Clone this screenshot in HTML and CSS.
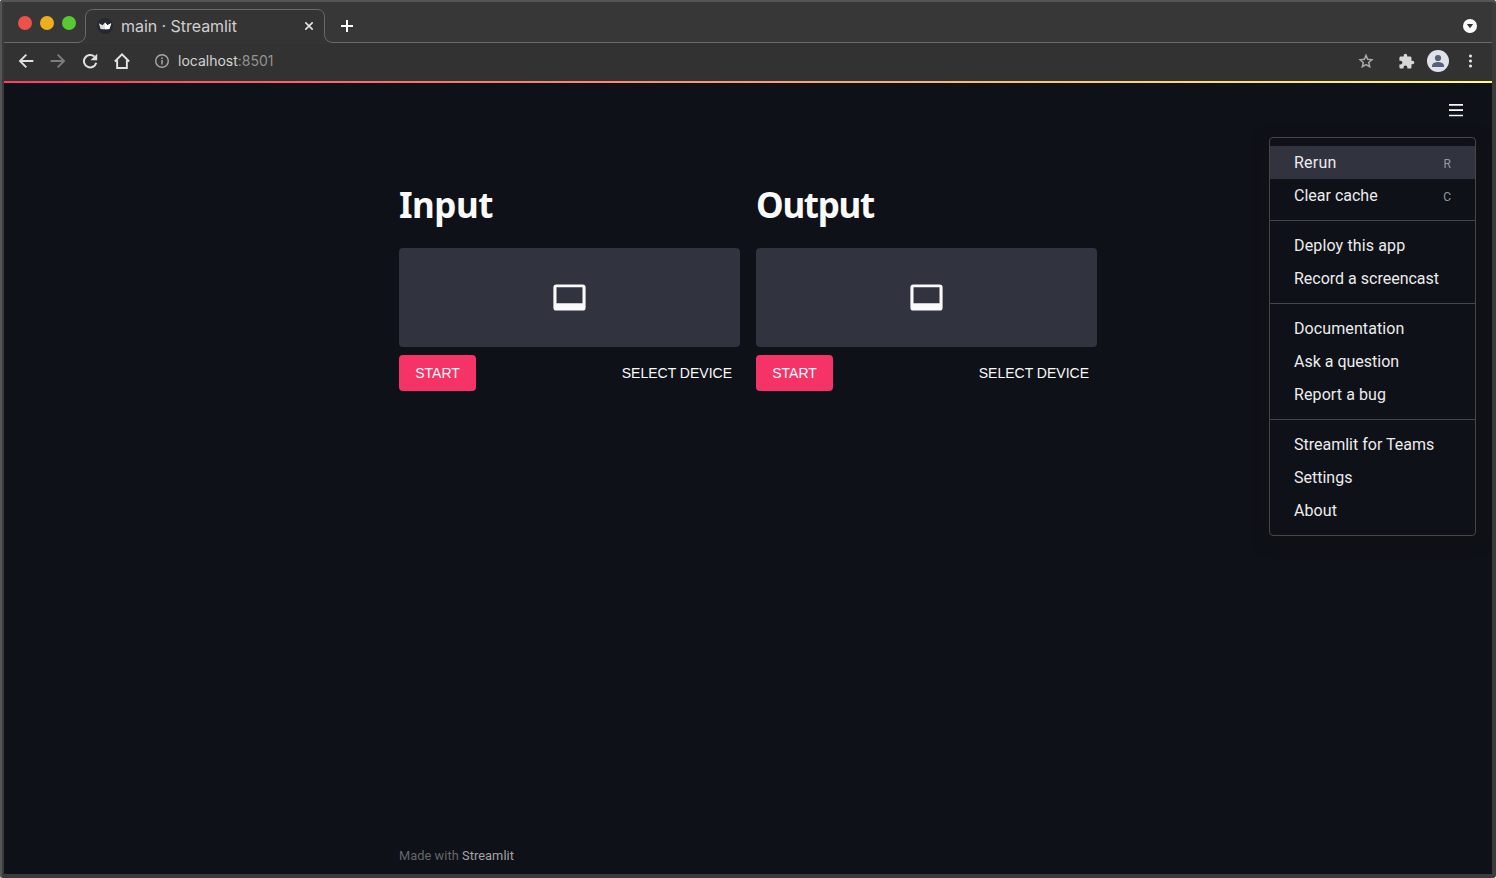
FILE: index.html
```html
<!DOCTYPE html>
<html lang="en">
<head>
<meta charset="utf-8">
<title>main · Streamlit</title>
<link rel="stylesheet" href="styles.css">
</head>
<body>
<div class="window">
  <header class="tabstrip">
    <div class="lights"><i class="light red"></i><i class="light yellow"></i><i class="light green"></i></div>
    <div class="tab">
      <svg class="tab-shape" width="256" height="36" viewBox="0 0 256 36"><path d="M0 34.500C5 34.500 8.500 31 8.500 26.500V9.500C8.500 4.500 11.500 1.500 16.500 1.500H240C245 1.500 247.500 4.500 247.500 9.500V26.500C247.500 31 251 34.500 256 34.500V36H0Z" fill="#343434"/><path d="M0 34.500C5 34.500 8.500 31 8.500 26.500V9.500C8.500 4.500 11.500 1.500 16.500 1.500H240C245 1.500 247.500 4.500 247.500 9.500V26.500C247.500 31 251 34.500 256 34.500" fill="none" stroke="#6b6b6b"/></svg>
      <svg class="favicon" width="16" height="16" viewBox="0 0 16 16"><circle cx="8" cy="8" r="8" fill="#262730"/><path d="M1.800 5.200 5.600 7.200 8 4.500 10.400 7.200 14.200 5.200 12.400 10.900Q8 11.800 3.600 10.900Z" fill="#ddd"/><path d="M8 4.500 10.400 7.200 14.200 5.200 12.400 10.900 8 11.200Z" fill="#fff"/></svg>
      <span class="tab-title">main · Streamlit</span>
      <svg class="tab-close" width="8" height="8" viewBox="0 0 8 8"><path d="M.3.300l7.400 7.400M7.700.3l-7.400 7.400" stroke="#e4e4e4" stroke-width="1.600"/></svg>
    </div>
    <svg class="new-tab" width="12" height="12" viewBox="0 0 12 12"><path d="M6 0v12M0 6h12" stroke="#fff" stroke-width="2"/></svg>
    <svg class="tab-search" width="14" height="14" viewBox="0 0 14 14"><circle cx="7" cy="7" r="7" fill="#fff"/><path d="M3.800 4.900h6.400L7 9.300Z" fill="#333"/></svg>
  </header>
  <nav class="toolbar">
    <svg class="nav-icon" viewBox="0 0 24 24" fill="#e2e2e2"><path d="M23 10.500H6.500l7-7-2-2L1 12l10.500 10.500 2-2-7-7H23z"/></svg>
    <svg class="nav-icon" viewBox="0 0 24 24" fill="#7d7d7d"><path d="M1 10.500h16.500l-7-7 2-2L23 12 12.500 22.500l-2-2 7-7H1z"/></svg>
    <svg class="nav-icon" viewBox="0 0 24 24"><path d="M21.300 14.500A9.300 9.300 0 1 1 18.500 5.400" fill="none" stroke="#e2e2e2" stroke-width="3"/><path d="M22.800 1v10h-10z" fill="#e2e2e2"/></svg>
    <svg class="nav-icon" viewBox="0 0 24 24"><path d="M1.300 12.800 12 2.100 22.700 12.800M4.700 11v11.500h14.600V11" fill="none" stroke="#e2e2e2" stroke-width="2.900"/></svg>
    <div class="address">
      <svg width="14" height="14" viewBox="0 0 14 14"><circle cx="7" cy="7" r="6.300" fill="none" stroke="#a5a8ac" stroke-width="1.400"/><path d="M7 6v4.500M7 3.400v1.500" stroke="#a5a8ac" stroke-width="1.500"/></svg>
      <span class="host">localhost<span class="port">:8501</span></span>
    </div>
    <svg class="star" width="16" height="16" viewBox="0 0 24 24"><path d="m12 3.600 2.500 5.900 6.400.6-4.800 4.200 1.400 6.300L12 17.300l-5.500 3.300 1.400-6.300-4.800-4.200 6.400-.6z" fill="none" stroke="#aaa" stroke-width="2.200"/></svg>
    <svg class="puzzle" width="17" height="17" viewBox="0 0 24 24"><path fill="#d8d8d8" d="M20.500 11H19V7c0-1.100-.9-2-2-2h-4V3.500a2.500 2.500 0 0 0-5 0V5H4c-1.100 0-2 .9-2 2v3.800h1.500a2.700 2.700 0 0 1 0 5.400H2V20c0 1.100.9 2 2 2h3.800v-1.500a2.700 2.700 0 0 1 5.400 0V22H17c1.100 0 2-.9 2-2v-4h1.500a2.500 2.500 0 0 0 0-5z"/></svg>
    <svg class="avatar" width="22" height="22" viewBox="0 0 22 22"><circle cx="11" cy="11" r="11" fill="#dfe2e8"/><circle cx="11" cy="8" r="3.100" fill="#566078"/><path d="M5 17v-1.500c0-2.400 4-3.500 6-3.500s6 1.100 6 3.500V17z" fill="#566078"/></svg>
    <svg class="kebab" width="4" height="14" viewBox="0 0 4 14" fill="#e2e2e2"><circle cx="1.500" cy="2" r="1.550"/><circle cx="1.500" cy="7" r="1.550"/><circle cx="1.500" cy="12" r="1.550"/></svg>
  </nav>
  <div class="decoration"></div>
  <main class="app">
    <svg class="hamburger" width="14" height="13" viewBox="0 0 14 13"><path d="M0 .8h14M0 6.150h14M0 11.500h14" stroke="#fafafa" stroke-width="1.700"/></svg>
    <div class="columns">
      <section class="column">
        <h1 class="heading input">Input</h1>
        <div class="preview"><svg width="33" height="27" viewBox="0 0 33 27"><path fill-rule="evenodd" fill="#fafafa" d="M3.300.4h26.400a2.900 2.900 0 0 1 2.900 2.900v20.400a2.900 2.900 0 0 1-2.900 2.900H3.300a2.900 2.900 0 0 1-2.900-2.900V3.300A2.900 2.900 0 0 1 3.300.4zM3.500 3.300v16h26v-16z"/></svg></div>
        <div class="actions"><button class="start">START</button><button class="select">SELECT DEVICE</button></div>
      </section>
      <section class="column">
        <h1 class="heading output">Output</h1>
        <div class="preview"><svg width="33" height="27" viewBox="0 0 33 27"><path fill-rule="evenodd" fill="#fafafa" d="M3.300.4h26.400a2.900 2.900 0 0 1 2.900 2.900v20.400a2.900 2.900 0 0 1-2.900 2.900H3.300a2.900 2.900 0 0 1-2.900-2.900V3.300A2.900 2.900 0 0 1 3.300.4zM3.500 3.300v16h26v-16z"/></svg></div>
        <div class="actions"><button class="start">START</button><button class="select">SELECT DEVICE</button></div>
      </section>
    </div>
    <footer class="footer">Made with <span class="brand">Streamlit</span></footer>
    <div class="menu">
      <ul class="group">
        <li class="item active"><span class="rerun">Rerun</span><span class="key">R</span></li>
        <li class="item"><span>Clear cache</span><span class="key">C</span></li>
      </ul>
      <ul class="group">
        <li class="item"><span class="deploy">Deploy this app</span></li>
        <li class="item"><span>Record a screencast</span></li>
      </ul>
      <ul class="group">
        <li class="item"><span class="docs">Documentation</span></li>
        <li class="item"><span>Ask a question</span></li>
        <li class="item"><span class="docs">Report a bug</span></li>
      </ul>
      <ul class="group">
        <li class="item"><span>Streamlit for Teams</span></li>
        <li class="item"><span>Settings</span></li>
        <li class="item"><span class="docs">About</span></li>
      </ul>
    </div>
  </main>
</div>
</body>
</html>
```
FILE: styles.css
```css
* { box-sizing: border-box; }
html { background: #fff; }
body { margin: 0; overflow: hidden; }
svg { display: block; flex: none; }

.window {
  display: flex;
  flex-direction: column;
  width: 1496px;
  height: 878px;
  padding: 2px 4px 4px;
  border-radius: 3px;
  background: #3b3b3b;
  box-shadow: inset 0 2px #555, inset 2px 0 #555;
}

.tabstrip {
  display: flex;
  align-items: flex-start;
  height: 41px;
  flex: none;
  background: #373737;
  border-bottom: 1px solid #6b6b6b;
}
.lights { display: flex; gap: 8px; padding: 14px 0 0 14px; }
.light { width: 14px; height: 14px; border-radius: 50%; }
.red { background: #ed5149; }
.yellow { background: #f0ad1c; }
.green { background: #57c933; }
.tab {
  position: relative;
  display: flex;
  align-items: center;
  width: 256px;
  height: 34px;
  margin: 6px 0 0 1px;
  padding: 2px 0 0 20px;
}
.tab-shape { position: absolute; left: 0; top: 0; }
.favicon { position: relative; }
.tab-title {
  position: relative;
  margin-left: 8px;
  width: 184px;
  font: 16px/20px Inter, sans-serif;
  letter-spacing: -.05px;
  color: #cfcfcf;
  white-space: nowrap;
}
.tab-close { position: relative; }
.new-tab { margin: 18px 0 0 8px; }
.tab-search { margin: 17px 15px 0 auto; }

.toolbar {
  display: flex;
  align-items: center;
  flex: none;
  height: 38px;
  padding: 0 19px 2px 14px;
  background: #323232;
}
.nav-icon { width: 16px; height: 16px; margin-right: 16px; }
.address { display: flex; align-items: center; gap: 9px; flex: 1; padding-left: 9px; }
.host { font: 14px/18px Inter, sans-serif; color: #d2d2d2; }
.port { color: #929292; }
.puzzle { margin-left: 24px; }
.avatar { margin-left: 12px; }
.kebab { margin-left: 20px; }

.decoration {
  flex: none;
  height: 2px;
  background: linear-gradient(90deg, #ff3d60, #fffd80);
}

.app {
  position: relative;
  display: flex;
  flex-direction: column;
  flex: 1;
  background: #0e1117;
  font-family: Roboto, sans-serif;
}
.hamburger { align-self: flex-end; margin: 21px 29px 0 0; }
.columns { display: flex; gap: 16px; padding: 66px 0 0 395px; }
.column { width: 341px; }
.heading {
  margin: 0;
  height: 65px;
  color: #fafafa;
  font: 700 35px/44px "Noto Sans", sans-serif;
}
.input { letter-spacing: -.5px; }
.output { letter-spacing: -1.3px; }
.preview {
  display: flex;
  align-items: center;
  justify-content: center;
  height: 99px;
  border-radius: 4px;
  background: #31333f;
}
.actions { display: flex; justify-content: space-between; margin-top: 8px; }
.start, .select {
  height: 36px;
  border: 0;
  border-radius: 4px;
  font: 14px/24px "Liberation Sans", Arial, sans-serif;
  color: #fafafa;
  white-space: nowrap;
}
.start { width: 77px; padding: 0; background: #f63366; }
.select { padding: 0 8px; background: none; }

.footer {
  margin: auto 0 9px 395px;
  font-size: 12.8px;
  letter-spacing: .06px;
  line-height: 19px;
  color: #65676c;
}
.brand { color: #a3a4a7; }

.menu {
  position: absolute;
  top: 54px;
  right: 16px;
  width: 207px;
  border: 1px solid #44464a;
  border-radius: 4px;
  background: #0e1117;
  box-shadow: 0 4px 16px rgba(18, 18, 18, .7);
}
.group { margin: 0; padding: 8px 0; list-style: none; }
.group + .group { border-top: 1px solid #44464a; }
.item {
  display: flex;
  justify-content: space-between;
  align-items: center;
  height: 33px;
  padding: 0 24px;
  color: #ececed;
  font-size: 16px;
  white-space: nowrap;
}
.rerun { letter-spacing: .25px; }
.deploy { letter-spacing: .14px; }
.docs { letter-spacing: .1px; }
.active { background: #31333f; }
.key { padding-top: 3px; font-size: 12px; color: #96979e; }
```
